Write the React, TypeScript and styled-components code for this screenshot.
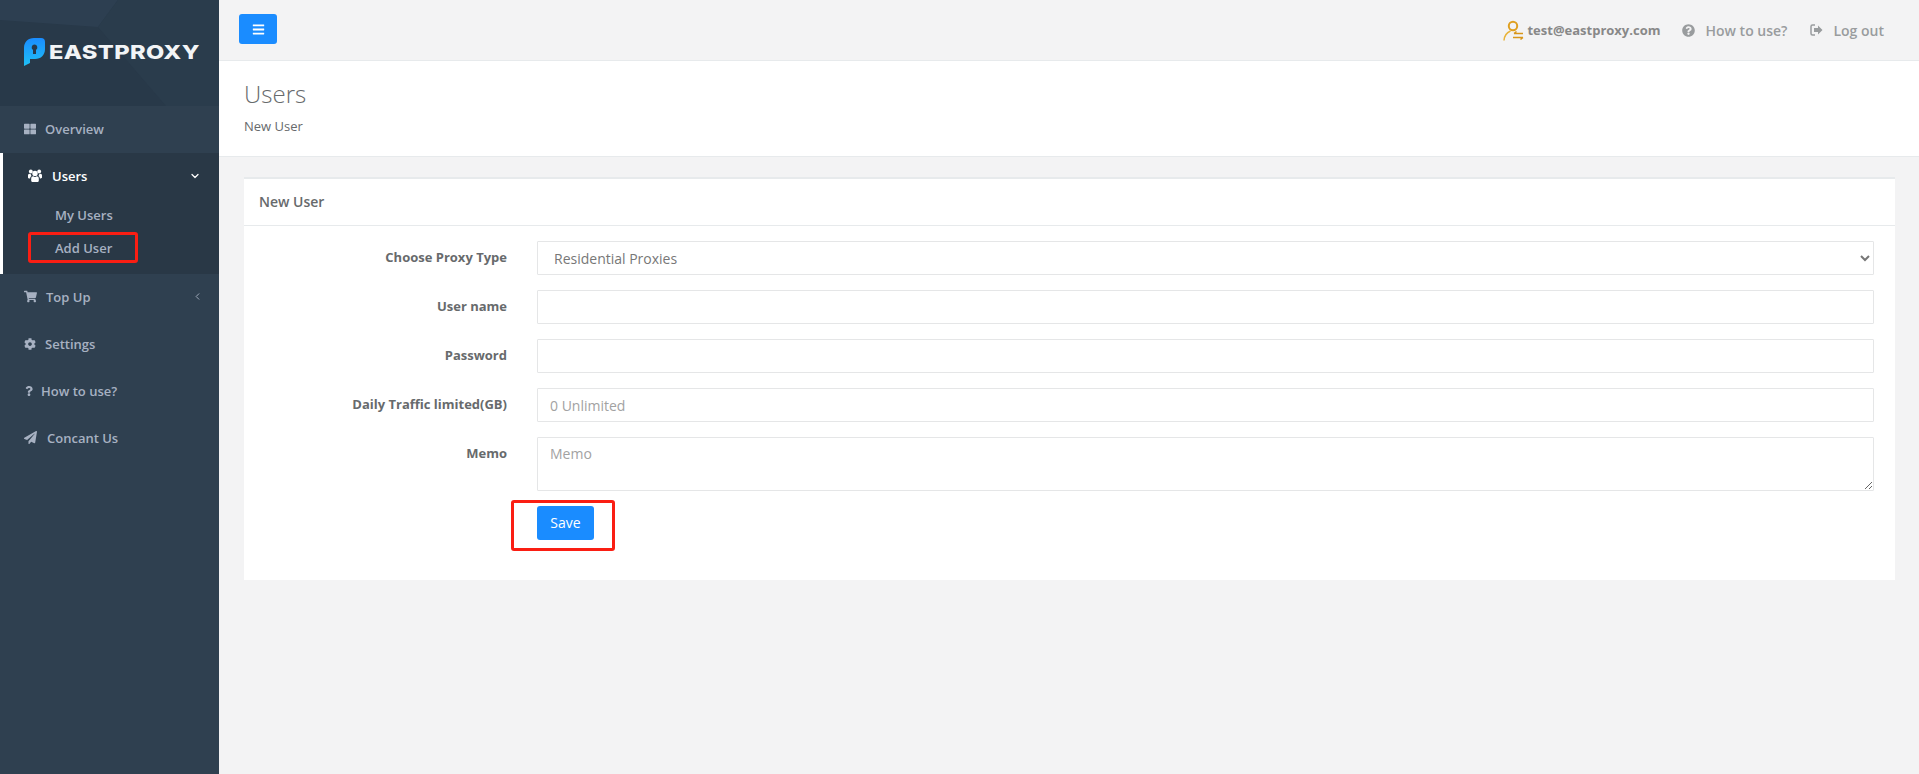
import { createGlobalStyle } from "styled-components";
import styled from "styled-components";
import {
  FaThLarge,
  FaShoppingCart,
  FaCog,
  FaQuestion,
  FaPaperPlane,
  FaQuestionCircle,
  FaBars,
} from "react-icons/fa";
import { ChevronDown, ChevronLeft } from "lucide-react";

const GlobalStyle = createGlobalStyle`
  html, body {
    margin: 0;
    height: 100%;
    overflow: hidden;
    background: #f3f3f4;
    font-family: "Open Sans", "Liberation Sans", sans-serif;
    font-size: 13px;
    color: #676a6c;
  }
  * { box-sizing: border-box; }
`;

const Shell = styled.div`
  display: flex;
  height: 774px;
`;

const Sidebar = styled.nav`
  width: 219px;
  flex-shrink: 0;
  background: #2f4050;
`;

const LogoHeader = styled.div`
  position: relative;
  height: 106px;
  display: flex;
  align-items: center;
  gap: 4px;
  padding: 0 0 2px 24px;
  background: #283949;
  overflow: hidden;

  &::before {
    content: "";
    position: absolute;
    inset: 0;
    background: #2d3f51;
    clip-path: polygon(0 0, 118px 0, 98px 27px, 0 20px);
  }
  &::after {
    content: "";
    position: absolute;
    inset: 0;
    background: #2a3c4c;
    clip-path: polygon(118px 0, 219px 0, 219px 106px, 166px 106px, 98px 27px);
  }
`;

const LogoMark = styled.svg`
  position: relative;
  z-index: 1;
  width: 21px;
  height: 28px;
`;

const LogoText = styled.span`
  position: relative;
  z-index: 1;
  font-family: "Inter", "Liberation Sans", sans-serif;
  font-weight: 800;
  font-size: 19px;
  letter-spacing: 0.3px;
  color: #f2f4f6;
  transform: scaleX(1.245);
  transform-origin: left center;
`;

const NavList = styled.ul`
  list-style: none;
  margin: 0;
  padding: 0;
`;

const NavItem = styled.li<{ $active?: boolean }>`
  background: ${(p) => (p.$active ? "#293846" : "transparent")};
  border-left: ${(p) => (p.$active ? "3px solid #fff" : "0")};
  height: ${(p) => (p.$active ? "121px" : "47px")};
`;

const NavLink = styled.a<{ $active?: boolean; $gap: number }>`
  display: flex;
  align-items: center;
  height: 47px;
  padding: 0 18px 2px ${(p) => (p.$active ? "25px" : "24px")};
  gap: ${(p) => p.$gap}px;
  font-weight: 600;
  font-size: 13px;
  color: ${(p) => (p.$active ? "#fff" : "#a7b1c2")};

  svg {
    flex-shrink: 0;
  }
`;

const Caret = styled.span<{ $nudge?: number }>`
  margin-left: auto;
  margin-right: ${(p) => p.$nudge ?? 0}px;
  display: flex;
`;

const SubList = styled.ul`
  list-style: none;
  margin: -1px 0 0;
  padding: 0;
`;

const SubItem = styled.li`
  position: relative;
  height: 33px;
  padding-left: 52px;
  line-height: 33px;
  font-weight: 600;
  font-size: 13px;
  color: #a7b1c2;
`;

const RedFrame = styled.span<{ $inset: string }>`
  position: absolute;
  inset: ${(p) => p.$inset};
  border: 3px solid #fa1e13;
  border-radius: 3px;
  pointer-events: none;
`;

const Main = styled.main`
  flex: 1;
  min-width: 0;
  display: flex;
  flex-direction: column;
`;

const Topbar = styled.header`
  height: 61px;
  flex-shrink: 0;
  display: flex;
  align-items: center;
  padding: 0 35px 0 20px;
  border-bottom: 1px solid #e7eaec;
`;

const MenuButton = styled.button`
  width: 38px;
  height: 30px;
  margin-top: -2px;
  border: 0;
  border-radius: 3px;
  background: #1a8cff;
  color: #fff;
  display: flex;
  align-items: center;
  justify-content: center;
  padding: 0;
`;

const TopLinks = styled.div`
  margin-left: auto;
  display: flex;
  align-items: center;
  font-size: 14px;
  color: #999c9e;
`;

const Account = styled.span`
  display: flex;
  align-items: center;
  gap: 3px;
  font-size: 13px;
  font-weight: 700;
  color: #888;
  margin-right: 22px;
`;

const TopLink = styled.a<{ $last?: boolean }>`
  display: flex;
  align-items: center;
  gap: 10px;
  font-weight: 600;
  font-size: 14px;
  margin-right: ${(p) => (p.$last ? "0" : "23px")};
`;

const PageHeading = styled.section`
  height: 96px;
  flex-shrink: 0;
  background: #fff;
  border-bottom: 1px solid #e7eaec;
  padding: 16px 25px 0;
`;

const PageTitle = styled.h2`
  margin: 0;
  font-size: 24px;
  font-weight: 300;
  line-height: 33px;
`;

const Crumb = styled.div`
  margin-top: 7px;
  font-size: 13px;
  line-height: 18px;
`;

const Content = styled.div`
  padding: 20px 24px 0 25px;
`;

const Card = styled.section`
  background: #fff;
  border-top: 2px solid #e7eaec;
`;

const CardTitle = styled.h5`
  margin: 0;
  height: 47px;
  padding: 0 15px 2px;
  display: flex;
  align-items: center;
  font-size: 14px;
  font-weight: 600;
  border-bottom: 1px solid #e7eaec;
`;

const Form = styled.form`
  display: grid;
  grid-template-columns: 263px 1fr;
  column-gap: 30px;
  row-gap: 15px;
  padding: 15px 21px 40px 0;
`;

const Label = styled.label`
  text-align: right;
  font-size: 13px;
  font-weight: 700;
  line-height: 18px;
  padding-top: 7px;
`;

const fieldCss = `
  display: block;
  width: 100%;
  height: 34px;
  padding: 6px 12px;
  border: 1px solid #e5e6e7;
  border-radius: 1px;
  background: #fff;
  font-family: "Open Sans", "Liberation Sans", sans-serif;
  font-size: 14px;
  color: #777;
  outline: none;
  &::placeholder { color: #a2a2a2; opacity: 1; }
`;

const Select = styled.select`
  ${fieldCss}
`;

const Input = styled.input`
  ${fieldCss}
`;

const Textarea = styled.textarea`
  ${fieldCss}
  height: 54px;
  resize: vertical;
`;

const SaveCell = styled.div`
  grid-column: 2;
`;

const SaveWrap = styled.div`
  position: relative;
  display: inline-block;
`;

const SaveButton = styled.button`
  display: block;
  width: 57px;
  height: 34px;
  border: 0;
  border-radius: 3px;
  background: #1a8cff;
  color: #fff;
  font-family: "Open Sans", "Liberation Sans", sans-serif;
  font-size: 14px;
  padding: 0 0 2px;
`;

const Logo = () => (
  <LogoMark viewBox="0 0 21 28">
    <defs>
      <linearGradient id="pin" x1="0" y1="0" x2="0" y2="1">
        <stop offset="0" stopColor="#1a8cff" />
        <stop offset="1" stopColor="#1fc0f5" />
      </linearGradient>
    </defs>
    <path
      d="M0 10C0 4 4 0 10 0h7q4 0 4 4v7c0 6-4 10-10 10H6v4l-6 3z"
      fill="url(#pin)"
    />
    <path d="M10.500 6.500a3 3 0 0 1 1.500 5.500v4h-3v-4a3 3 0 0 1 1.500-5.500z" fill="#27384a" />
  </LogoMark>
);

const UsersIcon = () => (
  <svg width="14" height="13" viewBox="0 0 14 13" fill="currentColor">
    <circle cx="7" cy="4.400" r="2.700" />
    <path d="M3.200 12.200V9.600c0-1.600 1-2.400 2-2.400.6.500 1.100.7 1.800.7s1.200-.2 1.800-.7c1 0 2 .8 2 2.400v2.600l-1 .8H4.200z" />
    <circle cx="2.800" cy="2.500" r="1.900" />
    <circle cx="11.200" cy="2.500" r="1.900" />
    <path d="M0 8.800V6.600c0-1 .6-1.800 1.500-1.800.5.400 1 .5 1.500.4-.1.900.3 1.500.7 1.900-1 .4-1.500 1.100-1.600 2.500H.8z" />
    <path d="M14 8.800V6.600c0-1-.6-1.800-1.500-1.800-.5.400-1 .5-1.500.4.100.900-.3 1.500-.7 1.900 1 .4 1.500 1.100 1.600 2.500h.8z" />
  </svg>
);

const UserBadge = () => (
  <svg width="21" height="21" viewBox="0 0 21 21" fill="none">
    <circle cx="10" cy="6" r="4.200" stroke="#dfa021" strokeWidth="2" />
    <path d="M1 20.500C1.300 15.500 4 12.500 7.500 11" stroke="#e8b33a" strokeWidth="1.500" />
    <path d="M11 13.500h9M13.500 11.500l-2.500 2" stroke="#d8961a" strokeWidth="1.500" />
    <path d="M10 17.500h10M17.500 19.500l2.500-2" stroke="#d8961a" strokeWidth="1.500" />
  </svg>
);

const LogOutIcon = () => (
  <svg width="13" height="12" viewBox="0 0 13 12">
    <path d="M5 1H2.500A1.500 1.500 0 0 0 1 2.500v7A1.500 1.500 0 0 0 2.500 11H5" fill="none" stroke="#999c9e" strokeWidth="1.500" />
    <path d="M4 4h4V1.500L12.500 6 8 10.500V8H4z" fill="#999c9e" />
  </svg>
);

const App = () => {
  return (
    <Shell>
      <GlobalStyle />
      <Sidebar>
        <LogoHeader>
          <Logo />
          <LogoText>EASTPROXY</LogoText>
        </LogoHeader>
        <NavList>
          <NavItem>
            <NavLink $gap={9}>
              <FaThLarge size={12} />
              Overview
            </NavLink>
          </NavItem>
          <NavItem $active>
            <NavLink $active $gap={10}>
              <UsersIcon />
              Users
              <Caret>
                <ChevronDown size={12} strokeWidth={2.5} />
              </Caret>
            </NavLink>
            <SubList>
              <SubItem>My Users</SubItem>
              <SubItem>
                Add User
                <RedFrame $inset="0 81px 2px 25px" />
              </SubItem>
            </SubList>
          </NavItem>
          <NavItem>
            <NavLink $gap={9}>
              <FaShoppingCart size={13} />
              Top Up
              <Caret $nudge={-2}>
                <ChevronLeft size={11} strokeWidth={2} />
              </Caret>
            </NavLink>
          </NavItem>
          <NavItem>
            <NavLink $gap={9}>
              <FaCog size={12} />
              Settings
            </NavLink>
          </NavItem>
          <NavItem>
            <NavLink $gap={7}>
              <FaQuestion size={10} />
              How to use?
            </NavLink>
          </NavItem>
          <NavItem>
            <NavLink $gap={10}>
              <FaPaperPlane size={13} />
              Concant Us
            </NavLink>
          </NavItem>
        </NavList>
      </Sidebar>

      <Main>
        <Topbar>
          <MenuButton type="button" aria-label="Toggle menu">
            <FaBars size={13} />
          </MenuButton>
          <TopLinks>
            <Account>
              <UserBadge />
              test@eastproxy.com
            </Account>
            <TopLink>
              <FaQuestionCircle size={13} />
              How to use?
            </TopLink>
            <TopLink $last>
              <LogOutIcon />
              Log out
            </TopLink>
          </TopLinks>
        </Topbar>

        <PageHeading>
          <PageTitle>Users</PageTitle>
          <Crumb>New User</Crumb>
        </PageHeading>

        <Content>
          <Card>
            <CardTitle>New User</CardTitle>
            <Form>
              <Label>Choose Proxy Type</Label>
              <Select defaultValue="residential">
                <option value="residential">Residential Proxies</option>
              </Select>
              <Label>User name</Label>
              <Input />
              <Label>Password</Label>
              <Input type="password" />
              <Label>Daily Traffic limited(GB)</Label>
              <Input placeholder="0 Unlimited" />
              <Label>Memo</Label>
              <Textarea placeholder="Memo" />
              <SaveCell>
                <SaveWrap>
                  <SaveButton type="button">Save</SaveButton>
                  <RedFrame $inset="-6px -21px -11px -26px" />
                </SaveWrap>
              </SaveCell>
            </Form>
          </Card>
        </Content>
      </Main>
    </Shell>
  );
};

export default App;
